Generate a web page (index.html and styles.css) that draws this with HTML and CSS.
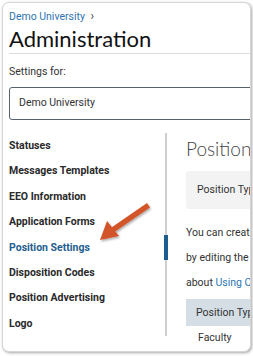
FILE: index.html
```html
<!DOCTYPE html>
<html lang="en">
<head>
    <meta charset="UTF-8">
    <meta name="viewport" content="width=device-width, initial-scale=1.0">
    <title>Administration</title>
    <link rel="stylesheet" href="styles.css">
</head>
<body>

    <div class="card">
        <div class="header">
            <a class="crumb" href="#">Demo University <span class="chev">&rsaquo;</span></a>
            <h1>Administration</h1>
        </div>

        <div class="settings-for">
            <label for="org">Settings for:</label>
            <div class="select" id="org">Demo University</div>
        </div>

        <div class="layout">
            <ul class="nav">
                <li><a href="#">Statuses</a></li>
                <li><a href="#">Messages Templates</a></li>
                <li><a href="#">EEO Information</a></li>
                <li><a href="#">Application Forms</a></li>
                <li><a class="active" href="#">Position Settings</a></li>
                <li><a href="#">Disposition Codes</a></li>
                <li><a href="#">Position Advertising</a></li>
                <li><a href="#">Logo</a></li>
            </ul>

            <div class="content">
                <h2>Position Settings</h2>
                <div class="tabs">Position Types</div>
                <p>
                    You can create position types for your postings<br>
                    by editing the table below. To learn more, read<br>
                    about <a href="#">Using Categories</a> in the help center.
                </p>
                <table class="types">
                    <tr><th>Position Type</th></tr>
                    <tr><td>Faculty</td></tr>
                </table>
            </div>
        </div>

        <!-- annotation arrow pointing at the active item -->
        <svg class="arrow" width="70" height="50" viewBox="0 0 70 50">
            <defs>
                <filter id="sh" x="-20%" y="-20%" width="150%" height="150%">
                    <feDropShadow dx="1" dy="1.5" stdDeviation="1" flood-color="#000" flood-opacity="0.35"/>
                </filter>
            </defs>
            <g filter="url(#sh)" fill="#d2552b">
                <path d="M54 4 L57 8.5 L20 34 L17 29.5 Z"/>
                <path d="M7 41 L14 22 L26 37 Z"/>
            </g>
        </svg>
    </div>

</body>
</html>
```

FILE: styles.css
```css
* {
    margin: 0;
    padding: 0;
    box-sizing: border-box;
}

body {
    font-family: Roboto, 'Liberation Sans', sans-serif;
    color: #222;
    background: #fff;
    width: 253px;
    height: 356px;
    overflow: hidden;
}

a {
    text-decoration: none;
}

.card {
    position: relative;
    margin: 2px 0 0 2px;
    width: 249px;
    height: 350px;
    border: 1px solid #d6d6d6;
    border-radius: 7px;
    box-shadow: 1px 1px 3px rgba(0, 0, 0, 0.35);
    overflow: hidden;
    padding-left: 6px;
    background: #fff;
}

.header {
    padding-top: 6px;
    border-bottom: 1px solid #dcdcdc;
    height: 51px;
}

.crumb {
    display: block;
    font-size: 10.5px;
    line-height: 14px;
    color: #2f74b0;
}

.chev {
    font-size: 12px;
    color: #444;
    margin-left: 3px;
}

h1 {
    font-family: Lato, 'Noto Sans', sans-serif;
    font-size: 22px;
    font-weight: 400;
    line-height: 28px;
    color: #111;
    margin-top: 1px;
}

.settings-for {
    padding-top: 11px;
}

.settings-for label {
    display: block;
    font-size: 10.5px;
    line-height: 14px;
    color: #333;
}

.select {
    margin-top: 8px;
    height: 33px;
    width: 260px;
    border: 1.5px solid #56626e;
    border-radius: 3px;
    padding-left: 9px;
    font-size: 10.5px;
    line-height: 30px;
    color: #333;
}

.layout {
    display: flex;
    margin-top: 13px;
}

.nav {
    list-style: none;
    flex: 0 0 158px;
    align-self: flex-start;
    border-right: 2px solid #cfcfcf;
}

.nav a {
    display: block;
    height: 25.4px;
    line-height: 25.4px;
    font-size: 10.5px;
    font-weight: 700;
    color: #2a2a2a;
}

.nav a.active {
    color: #1e5e8f;
    margin-right: -3px;
    border-right: 4px solid #1e5e8f;
}

.content {
    flex: 0 0 380px;
    padding-left: 19px;
}

h2 {
    font-family: Lato, 'Noto Sans', sans-serif;
    font-size: 19px;
    font-weight: 300;
    line-height: 28px;
    padding-top: 2px;
    color: #444;
    white-space: nowrap;
}

.tabs {
    margin-top: 8px;
    height: 38px;
    background: #f3f3f3;
    border-radius: 3px;
    padding-left: 11px;
    font-size: 10.5px;
    line-height: 37px;
    color: #333;
}

.content p {
    margin-top: 11px;
    font-size: 10.5px;
    line-height: 25px;
    color: #333;
    white-space: nowrap;
}

.content p a {
    color: #2a77b5;
}

.types {
    margin-top: 4px;
    width: 100%;
    border-collapse: collapse;
    font-size: 10.5px;
    color: #333;
    text-align: left;
}

.types th {
    font-weight: 400;
    background: #d5dee5;
    height: 27px;
    padding-left: 10px;
}

.types td {
    height: 22px;
    padding-left: 12px;
}

.arrow {
    position: absolute;
    left: 90px;
    top: 196px;
}
```
